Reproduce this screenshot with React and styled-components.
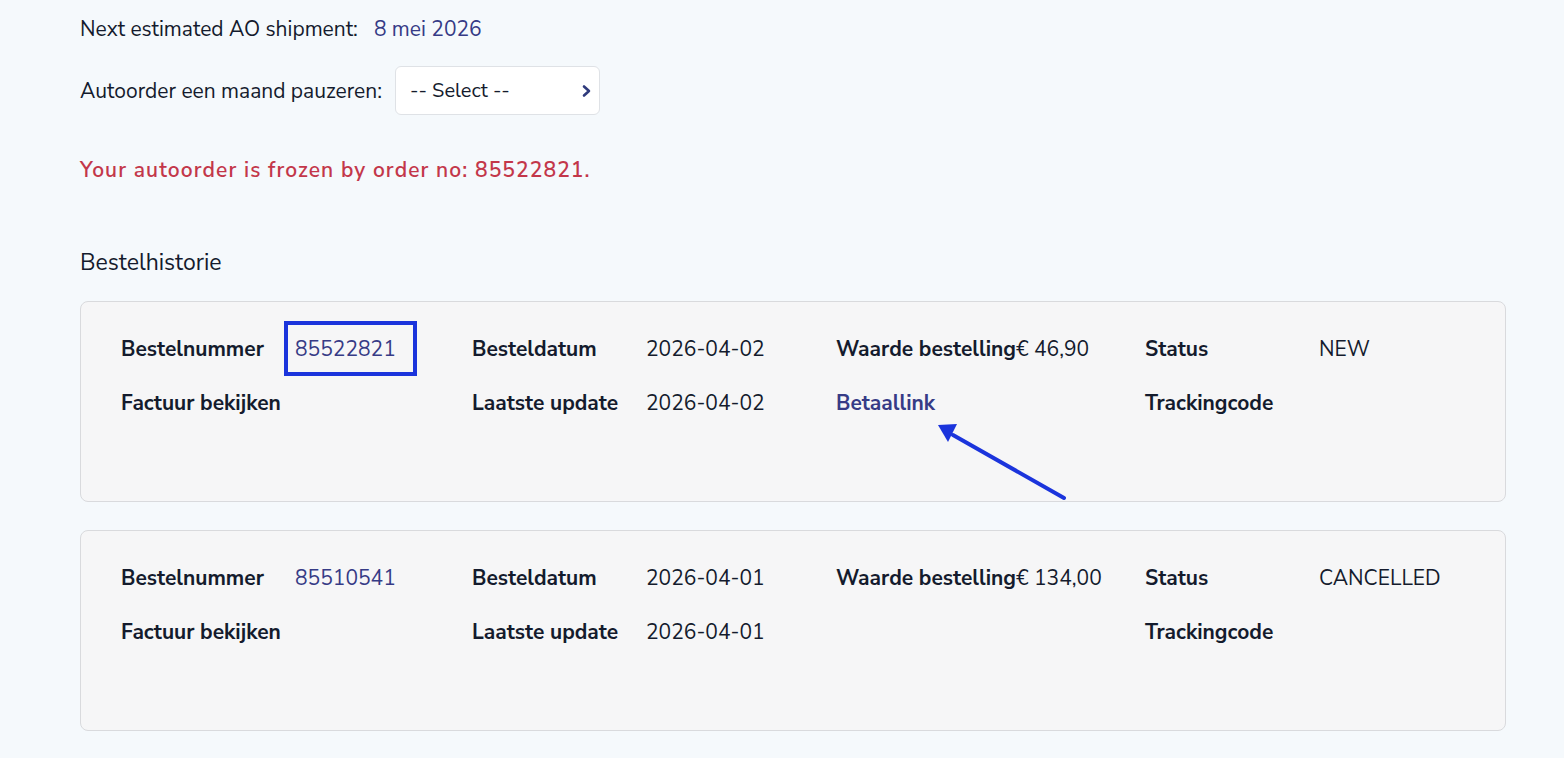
import React from "react";
import styled, { createGlobalStyle } from "styled-components";

const GlobalStyle = createGlobalStyle`
  body {
    margin: 0;
    background: #f5f9fc;
    font-family: "Nunito Sans", Lato, "Noto Sans", sans-serif;
    color: #141b2d;
  }
`

const Page = styled.div`
  padding: 17px 58px 40px 80px;
  display: flex;
  flex-direction: column;
`

const InfoLine = styled.div`
  display: flex;
  align-items: center;
  gap: ${props => props.gap || 13}px;
  font-size: 21px;
  line-height: 24px;
  margin-bottom: ${props => props.mb || 0}px;
`

const LinkText = styled.a`
  color: #363b86;
  text-decoration: none;
  font-weight: ${props => (props.bold ? 700 : 400)};
  cursor: pointer;
`

const SelectBox = styled.div`
  width: 205px;
  height: 49px;
  box-sizing: border-box;
  display: flex;
  align-items: center;
  justify-content: space-between;
  padding: 0 6px 0 14px;
  background: #fff;
  border: 1px solid #dfe2e6;
  border-radius: 6px;
  font-size: 20px;
`

const Frozen = styled.p`
  margin: 43px 0 0;
  color: #c3374a;
  font-size: 21px;
  font-weight: 600;
  letter-spacing: 1.1px;
  line-height: 24px;
`

const SectionTitle = styled.h2`
  margin: 67px 0 24px;
  font-size: 23px;
  font-weight: 400;
  line-height: 28px;
`

const Card = styled.div`
  position: relative;
  box-sizing: border-box;
  min-height: 201px;
  margin-bottom: 28px;
  padding: 35px 40px 0;
  background: #f6f6f7;
  border: 1.5px solid #d9dadd;
  border-radius: 8px;
`

const Grid = styled.div`
  display: grid;
  grid-template-columns: 174px 177px 174px 190px max-content 1fr 174px 146px;
  row-gap: 30px;
  font-size: 21px;
  line-height: 24px;
`

const Label = styled.div`
  font-weight: 700;
  white-space: nowrap;
`

const Value = styled.div`
  position: relative;
  white-space: nowrap;
  ${props =>
    props.marked &&
    `
    &::after {
      content: "";
      position: absolute;
      left: -11px;
      top: -16px;
      width: 133px;
      height: 55px;
      box-sizing: border-box;
      border: 4px solid #1b34dc;
    }
  `}
`

const Arrow = styled.svg`
  position: absolute;
  left: 850px;
  top: 115px;
  pointer-events: none;
`

const Chevron = () => (
  <svg width="12" height="14" viewBox="0 0 12 14">
    <path d="M3 2.5l5 4.5-5 4.5" fill="none" stroke="#2f3a7c" strokeWidth="2.6" strokeLinecap="round" strokeLinejoin="round" />
  </svg>
)

const orders = [
  {
    nr: "85522821",
    date: "2026-04-02",
    updated: "2026-04-02",
    value: "€ 46,90",
    status: "NEW",
    payLink: true,
    marked: true,
  },
  {
    nr: "85510541",
    date: "2026-04-01",
    updated: "2026-04-01",
    value: "€ 134,00",
    status: "CANCELLED",
  },
]

export default function App() {
  return (
    <>
      <GlobalStyle />
      <Page>
        <InfoLine mb={25} gap={16}>
          <span>Next estimated AO shipment:</span>
          <LinkText as="span">8 mei 2026</LinkText>
        </InfoLine>
        <InfoLine>
          <span>Autoorder een maand pauzeren:</span>
          <SelectBox>
            <span>-- Select --</span>
            <Chevron />
          </SelectBox>
        </InfoLine>
        <Frozen>Your autoorder is frozen by order no: 85522821.</Frozen>
        <SectionTitle>Bestelhistorie</SectionTitle>
        {orders.map(o => (
          <Card key={o.nr}>
            <Grid>
              <Label>Bestelnummer</Label>
              <Value marked={o.marked}>
                <LinkText>{o.nr}</LinkText>
              </Value>
              <Label>Besteldatum</Label>
              <Value>{o.date}</Value>
              <Label>Waarde bestelling</Label>
              <Value>{o.value}</Value>
              <Label>Status</Label>
              <Value>{o.status}</Value>

              <Label>Factuur bekijken</Label>
              <Value />
              <Label>Laatste update</Label>
              <Value>{o.updated}</Value>
              <Value>{o.payLink && <LinkText bold>Betaallink</LinkText>}</Value>
              <Value />
              <Label>Trackingcode</Label>
              <Value />
            </Grid>
            {o.payLink && (
              <Arrow width="140" height="90" viewBox="0 0 140 90">
                <line x1="22" y1="18" x2="133" y2="81" stroke="#1b34dc" strokeWidth="4" strokeLinecap="round" />
                <polygon points="7,8 26,7 17,25" fill="#1b34dc" />
              </Arrow>
            )}
          </Card>
        ))}
      </Page>
    </>
  )
}
